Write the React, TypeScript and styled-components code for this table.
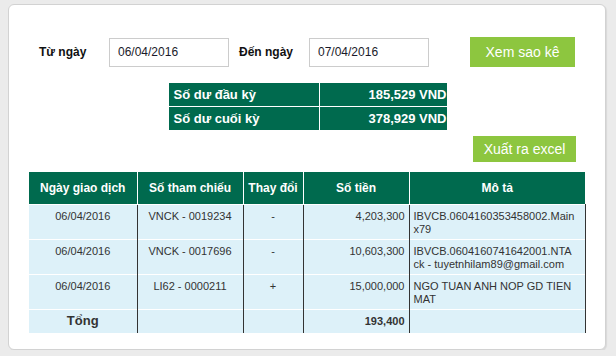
import React from 'react';
import styled, { createGlobalStyle } from 'styled-components';

const GlobalStyle = createGlobalStyle`
  html,
  body {
    margin: 0;
    padding: 0;
    background: #ebebeb;
    font-family: 'Liberation Sans', Arial, sans-serif;
  }
`;

const Card = styled.div`
  box-sizing: border-box;
  width: 598px;
  height: 346px;
  margin: 4px 0 0 8px;
  background: #ffffff;
  border: 1px solid #d2d2d2;
  border-radius: 6px;
  box-shadow: 1px 1px 1px rgba(0, 0, 0, 0.08);
  display: flex;
  flex-flow: column nowrap;
`;

const FilterRow = styled.div`
  display: flex;
  align-items: center;
  height: 30px;
  margin-top: 32px;
  padding-left: 30px;
`;

const FilterLabel = styled.label`
  width: 70px;
  font-size: 12px;
  font-weight: bold;
  color: #111;
`;

const DateInput = styled.input`
  box-sizing: border-box;
  width: 120px;
  height: 29px;
  margin-right: 10px;
  padding: 0 8px;
  border: 1px solid #cccccc;
  font-family: 'Liberation Sans', Arial, sans-serif;
  font-size: 12px;
  color: #1a1a2a;
  outline: none;

  &:last-of-type {
    margin-right: 41px;
  }
`;

const GreenButton = styled.button<{ $w: number; $h: number }>`
  box-sizing: border-box;
  width: ${p => p.$w}px;
  height: ${p => p.$h}px;
  padding: 0;
  border: none;
  background: #8dc63f;
  color: #ffffff;
  font-family: 'Liberation Sans', Arial, sans-serif;
  font-size: 14px;
  cursor: pointer;
`;

const Summary = styled.div`
  align-self: center;
  display: grid;
  grid-template-columns: 150px 127px;
  grid-auto-rows: 23px;
  gap: 1px;
  margin-top: 16px;
  margin-left: 1px;
  background: #ffffff;
`;

const SummaryCell = styled.div<{ $right?: boolean }>`
  display: flex;
  align-items: center;
  justify-content: ${p => (p.$right ? 'flex-end' : 'flex-start')};
  padding: ${p => (p.$right ? '0' : '0 0 0 5px')};
  overflow: hidden;
  white-space: nowrap;
  background: #006a4e;
  color: #ffffff;
  font-size: 13px;
  font-weight: bold;
`;

const ExportBar = styled.div`
  display: flex;
  justify-content: flex-end;
  margin-top: 6px;
  padding-right: 29px;
`;

const Table = styled.table`
  width: 556px;
  margin: 10px 0 0 20px;
  border-collapse: collapse;
  table-layout: fixed;
  font-size: 11px;
`;

const HeadCell = styled.th`
  height: 32px;
  padding: 0;
  background: #006a4e;
  color: #ffffff;
  font-size: 12px;
  font-weight: bold;
  text-align: center;
  border-right: 1px solid #ffffff;

  &:last-child {
    border-right: none;
  }
`;

const BodyRow = styled.tr<{ $total?: boolean }>`
  height: ${p => (p.$total ? 23 : 35)}px;
  background: #ddf1f9;
  border-top: 1px solid #ffffff;
  font-weight: ${p => (p.$total ? 'bold' : 'normal')};
`;

const BodyCell = styled.td<{ $align?: 'left' | 'center' | 'right' }>`
  padding: ${p =>
    p.$align === 'right'
      ? '5px 4px 0 0'
      : p.$align === 'left'
        ? '5px 10px 0 4px'
        : '5px 4px 0 4px'};
  vertical-align: top;
  line-height: 13px;
  color: #333333;
  text-align: ${p => p.$align || 'center'};
  overflow-wrap: anywhere;
  border-right: 1px solid #333333;
`;

const TotalLabel = styled(BodyCell)`
  padding-top: 3px;
  font-size: 13px;
  line-height: 15px;
`;

type Transaction = {
  date: string;
  reference: string;
  change: string;
  amount: string;
  description: string;
};

const transactions: Transaction[] = [
  {
    date: '06/04/2016',
    reference: 'VNCK - 0019234',
    change: '-',
    amount: '4,203,300',
    description: 'IBVCB.0604160353458002.Mainx79',
  },
  {
    date: '06/04/2016',
    reference: 'VNCK - 0017696',
    change: '-',
    amount: '10,603,300',
    description: 'IBVCB.0604160741642001.NTAck - tuyetnhilam89@gmail.com',
  },
  {
    date: '06/04/2016',
    reference: 'LI62 - 0000211',
    change: '+',
    amount: '15,000,000',
    description: 'NGO TUAN ANH NOP GD TIEN MAT',
  },
];

export default function App() {
  return (
    <>
      <GlobalStyle />
      <Card>
        <FilterRow>
          <FilterLabel>Từ ngày</FilterLabel>
          <DateInput defaultValue="06/04/2016" />
          <FilterLabel>Đến ngày</FilterLabel>
          <DateInput defaultValue="07/04/2016" />
          <GreenButton $w={105} $h={30}>
            Xem sao kê
          </GreenButton>
        </FilterRow>

        <Summary>
          <SummaryCell>Số dư đầu kỳ</SummaryCell>
          <SummaryCell $right>185,529 VND</SummaryCell>
          <SummaryCell>Số dư cuối kỳ</SummaryCell>
          <SummaryCell $right>378,929 VND</SummaryCell>
        </Summary>

        <ExportBar>
          <GreenButton $w={103} $h={26}>
            Xuất ra excel
          </GreenButton>
        </ExportBar>

        <Table>
          <colgroup>
            <col style={{ width: 108 }} />
            <col style={{ width: 106 }} />
            <col style={{ width: 60 }} />
            <col style={{ width: 106 }} />
            <col style={{ width: 176 }} />
          </colgroup>
          <thead>
            <tr>
              <HeadCell>Ngày giao dịch</HeadCell>
              <HeadCell>Số tham chiếu</HeadCell>
              <HeadCell>Thay đổi</HeadCell>
              <HeadCell>Số tiền</HeadCell>
              <HeadCell>Mô tả</HeadCell>
            </tr>
          </thead>
          <tbody>
            {transactions.map(t => (
              <BodyRow key={t.reference}>
                <BodyCell>{t.date}</BodyCell>
                <BodyCell>{t.reference}</BodyCell>
                <BodyCell>{t.change}</BodyCell>
                <BodyCell $align="right">{t.amount}</BodyCell>
                <BodyCell $align="left">{t.description}</BodyCell>
              </BodyRow>
            ))}
            <BodyRow $total>
              <TotalLabel>Tổng</TotalLabel>
              <BodyCell />
              <BodyCell />
              <BodyCell $align="right">193,400</BodyCell>
              <BodyCell $align="left" />
            </BodyRow>
          </tbody>
        </Table>
      </Card>
    </>
  );
}
